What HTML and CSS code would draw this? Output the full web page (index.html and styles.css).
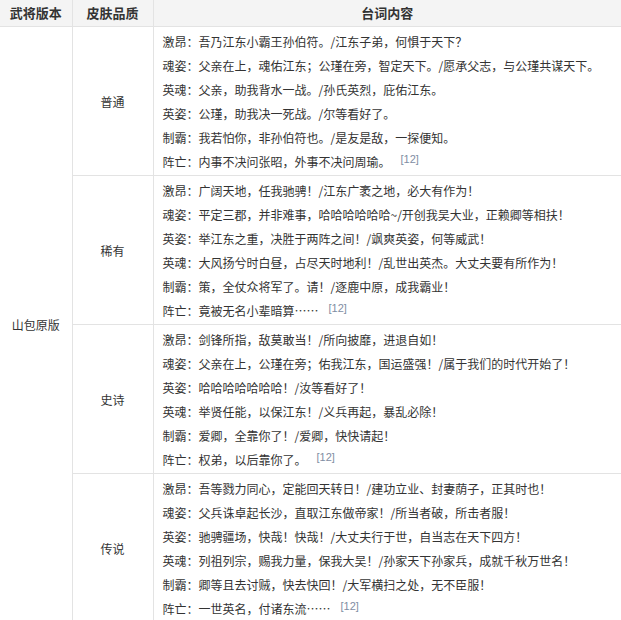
FILE: index.html
```html
<!DOCTYPE html>
<html lang="zh">
<head>
<meta charset="utf-8">
<title>皮肤台词</title>
<link rel="stylesheet" href="styles.css">
</head>
<body>
<table class="voice-table">
  <colgroup>
    <col class="col-version">
    <col class="col-quality">
    <col class="col-lines">
  </colgroup>
  <thead>
    <tr>
      <th>武将版本</th>
      <th>皮肤品质</th>
      <th>台词内容</th>
    </tr>
  </thead>
  <tbody>
    <tr>
      <td class="version" rowspan="4">山包原版</td>
      <td class="quality">普通</td>
      <td class="lines">
        <div class="line">激昂：吾乃江东小霸王孙伯符。/江东子弟，何惧于天下？</div>
        <div class="line">魂姿：父亲在上，魂佑江东；公瑾在旁，智定天下。/愿承父志，与公瑾共谋天下。</div>
        <div class="line">英魂：父亲，助我背水一战。/孙氏英烈，庇佑江东。</div>
        <div class="line">英姿：公瑾，助我决一死战。/尔等看好了。</div>
        <div class="line">制霸：我若怕你，非孙伯符也。/是友是敌，一探便知。</div>
        <div class="line">阵亡：内事不决问张昭，外事不决问周瑜。<sup class="ref">[12]</sup></div>
      </td>
    </tr>
    <tr>
      <td class="quality">稀有</td>
      <td class="lines">
        <div class="line">激昂：广阔天地，任我驰骋！/江东广袤之地，必大有作为！</div>
        <div class="line">魂姿：平定三郡，并非难事，哈哈哈哈哈哈~/开创我吴大业，正赖卿等相扶！</div>
        <div class="line">英姿：举江东之重，决胜于两阵之间！/飒爽英姿，何等威武！</div>
        <div class="line">英魂：大风扬兮时白昼，占尽天时地利！/乱世出英杰。大丈夫要有所作为！</div>
        <div class="line">制霸：策，全仗众将军了。请！/逐鹿中原，成我霸业！</div>
        <div class="line">阵亡：竟被无名小辈暗算……<sup class="ref">[12]</sup></div>
      </td>
    </tr>
    <tr>
      <td class="quality">史诗</td>
      <td class="lines">
        <div class="line">激昂：剑锋所指，敌莫敢当！/所向披靡，进退自如！</div>
        <div class="line">魂姿：父亲在上，公瑾在旁；佑我江东，国运盛强！/属于我们的时代开始了！</div>
        <div class="line">英姿：哈哈哈哈哈哈哈！/汝等看好了！</div>
        <div class="line">英魂：举贤任能，以保江东！/义兵再起，暴乱必除！</div>
        <div class="line">制霸：爱卿，全靠你了！/爱卿，快快请起！</div>
        <div class="line">阵亡：权弟，以后靠你了。<sup class="ref">[12]</sup></div>
      </td>
    </tr>
    <tr>
      <td class="quality">传说</td>
      <td class="lines">
        <div class="line">激昂：吾等戮力同心，定能回天转日！/建功立业、封妻荫子，正其时也！</div>
        <div class="line">魂姿：父兵诛卓起长沙，直取江东做帝家！/所当者破，所击者服！</div>
        <div class="line">英姿：驰骋疆场，快哉！快哉！/大丈夫行于世，自当志在天下四方！</div>
        <div class="line">英魂：列祖列宗，赐我力量，保我大吴！/孙家天下孙家兵，成就千秋万世名！</div>
        <div class="line">制霸：卿等且去讨贼，快去快回！/大军横扫之处，无不臣服！</div>
        <div class="line">阵亡：一世英名，付诸东流……<sup class="ref">[12]</sup></div>
      </td>
    </tr>
  </tbody>
</table>
</body>
</html>
```

FILE: styles.css
```css
html, body {
  margin: 0;
  padding: 0;
  background: #ffffff;
}

body {
  font-family: "Noto Sans CJK SC", "Noto Sans", sans-serif;
  font-size: 12px;
  color: #333333;
}

.voice-table {
  width: 621px;
  border-collapse: collapse;
  border-style: hidden;
  table-layout: fixed;
}

.col-version { width: 72px; }
.col-quality { width: 81px; }

.voice-table th,
.voice-table td {
  border: 1px solid #e3e3e3;
  padding: 0;
}

.voice-table th {
  height: 26px;
  background: #f4f4f4;
  font-size: 13px;
  font-weight: bold;
  color: #333333;
  text-align: center;
  vertical-align: middle;
  line-height: 26px;
}

.version,
.quality {
  text-align: center;
  vertical-align: middle;
}

.lines {
  padding: 3px 0 1px 9px !important;
  vertical-align: top;
}

.line {
  line-height: 24px;
  height: 24px;
  white-space: nowrap;
}

.ref {
  font-family: "Liberation Sans", Arial, sans-serif;
  font-size: 11px;
  color: #7f8ea3;
  line-height: 0;
  vertical-align: 4px;
  margin-left: 10px;
}
```
